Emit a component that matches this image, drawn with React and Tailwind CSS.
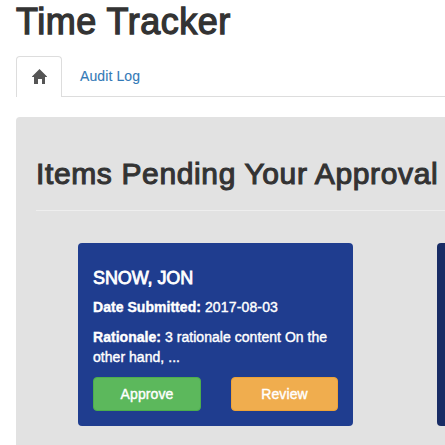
function HomeIcon() {
  return (
    <svg width="16" height="15" viewBox="0 0 16 15" className="block fill-[#555]" aria-label="Home">
      <path d="M7.5 0 L15 7.5 V8 H13 V15 H10 V10 H6 V15 H2 V8 H0 V7.5 Z" />
    </svg>
  );
}

function Tabs() {
  return (
    <nav className="mt-4 flex h-[41px] w-[600px] items-start border-b border-[#ddd]">
      <a className="flex h-[41px] w-[46px] shrink-0 rounded-t border border-b-0 border-[#ddd] bg-white pl-[15px] pt-3">
        <HomeIcon />
      </a>
      <a className="ml-0.5 px-4 pt-2.5 text-sm leading-5 tracking-[0.1px] text-[#337ab7] [-webkit-text-stroke:0.1px_#337ab7]">Audit Log</a>
    </nav>
  );
}

function RequestCard() {
  return (
    <article className="h-[183px] w-[275px] shrink-0 rounded bg-[#1f3d8f] px-[15px] pt-[25px] text-white">
      <h4 className="text-lg leading-5 tracking-[-0.1px] [-webkit-text-stroke:0.8px_white]">SNOW, JON</h4>
      <p className="mt-[9px] text-sm leading-5 tracking-[0.04px] [-webkit-text-stroke:0.4px_white]">
        <b>Date Submitted:</b> <span className="tracking-[0.15px]">2017-08-03</span>
      </p>
      <p className="mt-2.5 text-sm leading-5 tracking-[0.04px] [-webkit-text-stroke:0.4px_white]">
        <b>Rationale:</b> 3 rationale content On the<br />other hand, ...
      </p>
      <div className="mt-2.5 flex justify-between text-sm leading-5 tracking-[0.1px] [-webkit-text-stroke:0.4px_white]">
        <button className="h-[34px] w-[108px] rounded border border-[#4cae4c] bg-[#5cb85c]">Approve</button>
        <button className="h-[34px] w-[107px] rounded border border-[#eea236] bg-[#f0ad4e]">Review</button>
      </div>
    </article>
  );
}

export default function App() {
  return (
    <main className="h-[445px] w-[445px] overflow-hidden bg-white pl-4 font-['Liberation_Sans',sans-serif] text-[#333]">
      <h1 className="h-10 whitespace-nowrap text-4xl leading-[44px] tracking-[0.5px] [-webkit-text-stroke:1.3px_#333]">Time Tracker</h1>
      <Tabs />
      <section className="mt-5 h-[400px] w-[600px] rounded bg-[#e2e2e2] px-5 pt-10">
        <h2 className="whitespace-nowrap text-3xl leading-[33px] tracking-[0.63px] [-webkit-text-stroke:1.1px_#333]">Items Pending Your Approval</h2>
        <hr className="mt-5 border-t border-[#eee]" />
        <div className="mt-8 flex gap-[84px] pl-[42px]">
          <RequestCard />
          <div className="h-[183px] w-[275px] shrink-0 rounded bg-[#182c65]" />
        </div>
      </section>
    </main>
  );
}
